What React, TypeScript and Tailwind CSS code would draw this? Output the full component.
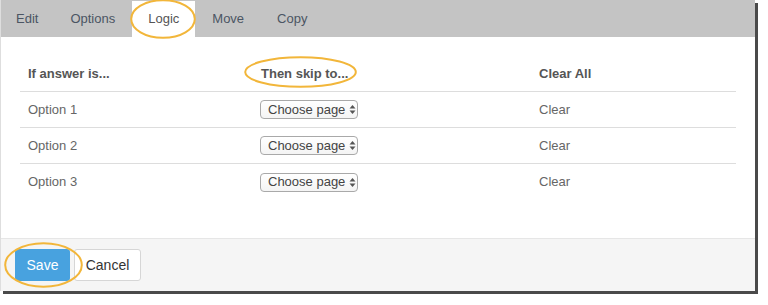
import React from "react";

const Arrows = () => (
  <svg width="7" height="11" viewBox="0 0 7 11" className="ml-[4px]">
    <path d="M3.5 1 L6.5 4.5 L0.5 4.5 Z" fill="#555" />
    <path d="M3.5 10 L6.5 6.5 L0.5 6.5 Z" fill="#555" />
  </svg>
);

const Select = () => (
  <div className="ml-[-1px] flex h-[19px] w-[98px] items-center rounded-[4px] border border-[#a9a9a9] bg-gradient-to-b from-white to-[#f4f4f4] pl-[7px] text-[13px] text-[#444]">
    <span>Choose page</span>
    <Arrows />
  </div>
);

const Ellipse = ({ x, y, w, h }: { x: number; y: number; w: number; h: number }) => (
  <svg
    className="pointer-events-none absolute"
    style={{ left: x, top: y }}
    width={w}
    height={h}
    viewBox={`0 0 ${w} ${h}`}
  >
    <ellipse cx={w / 2} cy={h / 2} rx={w / 2 - 1.2} ry={h / 2 - 1.2} fill="none" stroke="#f2b63a" strokeWidth="2" />
  </svg>
);

export default function App() {
  const rows = ["Option 1", "Option 2", "Option 3"];
  return (
    <div className="relative h-[305px] w-[768px] bg-white" style={{ fontFamily: '"Liberation Sans", Arial, sans-serif' }}>
      <div className="w-[755px] border-l border-[#dedede] shadow-[3px_3px_0_#4a4a4a]">
        {/* Tabs */}
        <div className="flex h-[37px] items-stretch bg-[#c4c4c4] pl-[0px] text-[13px] text-[#4b5563]">
          <div className="flex items-center px-[15px]">Edit</div>
          <div className="ml-[1px] flex items-center px-[16px]">Options</div>
          <div className="ml-[1px] mt-[1px] flex items-center bg-white px-[16px] text-[#555]">Logic</div>
          <div className="ml-[1px] flex items-center px-[16px]">Move</div>
          <div className="ml-[1px] flex items-center px-[16px]">Copy</div>
        </div>
        {/* Content */}
        <div className="bg-white px-[19px] pb-[38px] pt-[20px]">
          <div className="grid h-[35px] grid-cols-[233px_278px_1fr] items-center border-b border-[#dddddd] text-[13px] font-bold text-[#555]">
            <div className="px-[8px]">If answer is...</div>
            <div className="px-[8px]">Then skip to...</div>
            <div className="px-[8px]">Clear All</div>
          </div>
          {rows.map((r, i) => (
            <div
              key={r}
              className={`grid h-[36px] grid-cols-[233px_278px_1fr] items-center text-[13px] text-[#666] ${
                i < 2 ? "border-b border-[#dddddd]" : ""
              }`}
            >
              <div className="px-[8px]">{r}</div>
              <div className="px-[8px]">
                <Select />
              </div>
              <div className="px-[8px]">Clear</div>
            </div>
          ))}
        </div>
        {/* Footer */}
        <div className="flex h-[53px] items-center gap-[4px] border-t border-[#e6e6e6] bg-[#f5f5f5] pl-[14px]">
          <div className="flex h-[32px] w-[55px] items-center justify-center rounded-[3px] bg-[#48a2df] text-[14px] text-white">
            Save
          </div>
          <div className="flex h-[32px] w-[67px] items-center justify-center rounded-[3px] border border-[#d6d6d6] bg-white text-[14px] text-[#333]">
            Cancel
          </div>
        </div>
      </div>
      <Ellipse x={130} y={-1} w={66} h={40} />
      <Ellipse x={244} y={56} w={113} h={32} />
      <Ellipse x={4} y={242} w={79} h={46} />
    </div>
  );
}
